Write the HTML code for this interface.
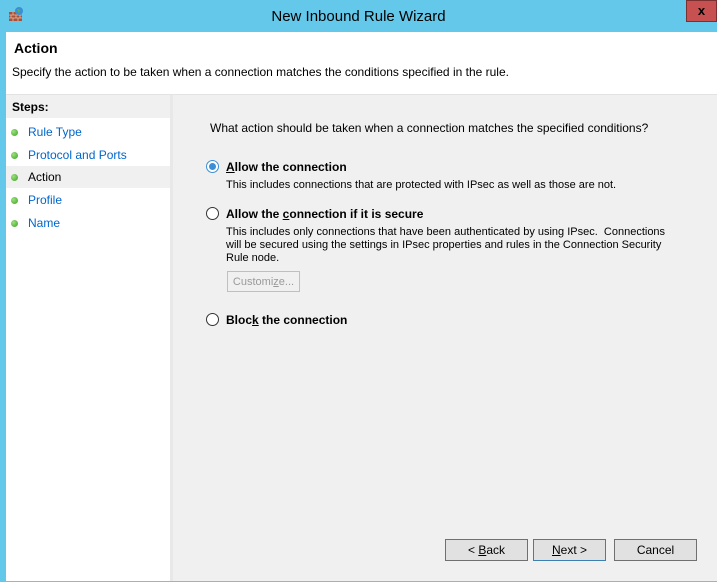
<!DOCTYPE html><html><head><style>
*{margin:0;padding:0;box-sizing:border-box}
body{width:717px;height:582px;overflow:hidden;background:#63c8ea;font-family:"Liberation Sans",sans-serif;font-size:12px;position:relative}
.abs{position:absolute}
.title{left:0;top:0;width:717px;height:31px;text-align:center;font-size:15px;line-height:33px;color:#000}
.close{left:686px;top:0;width:31px;height:22px;background:#c75050;border:1px solid #7a3030;color:#000;font-weight:bold;text-align:center;line-height:19px;font-size:13px}
.head{left:6px;top:32px;width:711px;height:63px;background:#fff;border-bottom:1px solid #e3e3e3}
.steps{left:6px;top:95px;width:167px;height:486px;background:#fff;border-right:3px solid #e8e8e8}
.main{left:173px;top:95px;width:544px;height:486px;background:#f0f0f0}
.sh{left:0;top:0;width:164px;height:23px;background:#f0f0f0;font-weight:bold;padding:5px 0 0 6px}
.st{left:0;width:164px;height:22px;line-height:22px;padding-left:22px;color:#0066cc}
.dot{position:absolute;left:5px;top:8px;width:7px;height:7px;border-radius:50%;background:radial-gradient(circle at 35% 35%,#9de07d,#3aa324)}
.radio{width:13px;height:13px;border-radius:50%;border:1px solid #333;background:#fff}
.btn{height:22px;border:1px solid #707070;background:#e1e1e1;text-align:center;line-height:20px}
b{font-weight:bold}
</style></head><body>
<div class="abs" style="left:8px;top:6px;width:16px;height:16px">
<svg width="16" height="16"><rect x="1" y="6" width="13" height="9" fill="#a9503a"/><path d="M1 9h13M1 12h13M5 6v3M10 6v3M3 9v3M8 9v3M12 9v3M5 12v3M10 12v3" stroke="#e0c0a0" stroke-width="0.8"/><circle cx="11" cy="5" r="4" fill="#3b8fd6"/><path d="M9 3l3 1-1 3" fill="#5dbb3a"/></svg></div>
<div class="abs title">New Inbound Rule Wizard</div>
<div class="abs close">x</div>
<div class="abs head"><div style="position:absolute;left:8px;top:8px;font-size:14px;font-weight:bold">Action</div><div style="position:absolute;left:6px;top:33px">Specify the action to be taken when a connection matches the conditions specified in the rule.</div></div>
<div class="abs steps">
<div class="abs sh">Steps:</div>
<div class="abs st" style="top:26px"><span class="dot"></span>Rule Type</div>
<div class="abs st" style="top:49px"><span class="dot"></span>Protocol and Ports</div>
<div class="abs st" style="top:71px;background:#f0f0f0;color:#000"><span class="dot"></span>Action</div>
<div class="abs st" style="top:94px"><span class="dot"></span>Profile</div>
<div class="abs st" style="top:117px"><span class="dot"></span>Name</div>
</div>
<div class="abs main">
<div class="abs" style="left:37px;top:26px">What action should be taken when a connection matches the specified conditions?</div>
<div class="abs radio" style="left:33px;top:65px;border-color:#3c8fd6"><div style="margin:2px;width:7px;height:7px;border-radius:50%;background:#3c8fd6"></div></div>
<div class="abs" style="left:53px;top:65px"><b><u>A</u>llow the connection</b></div>
<div class="abs" style="left:53px;top:84px;font-size:11px">This includes connections that are protected with IPsec as well as those are not.</div>
<div class="abs radio" style="left:33px;top:112px"></div>
<div class="abs" style="left:53px;top:112px"><b>Allow the <u>c</u>onnection if it is secure</b></div>
<div class="abs" style="left:53px;top:131px;font-size:11px;line-height:13px;width:440px">This includes only connections that have been authenticated by using IPsec.&nbsp; Connections will be secured using the settings in IPsec properties and rules in the Connection Security Rule node.</div>
<div class="abs btn" style="left:54px;top:176px;width:73px;height:21px;border-color:#bfbfbf;background:#f0f0f0;color:#9a9a9a;font-size:11px">Customi<u>z</u>e...</div>
<div class="abs radio" style="left:33px;top:218px"></div>
<div class="abs" style="left:53px;top:218px"><b>Bloc<u>k</u> the connection</b></div>
<div class="abs btn" style="left:272px;top:444px;width:83px">&lt; <u>B</u>ack</div>
<div class="abs btn" style="left:360px;top:444px;width:73px;border-color:#3c7fb1"><u>N</u>ext &gt;</div>
<div class="abs btn" style="left:441px;top:444px;width:83px">Cancel</div>
</div>
</body></html>
